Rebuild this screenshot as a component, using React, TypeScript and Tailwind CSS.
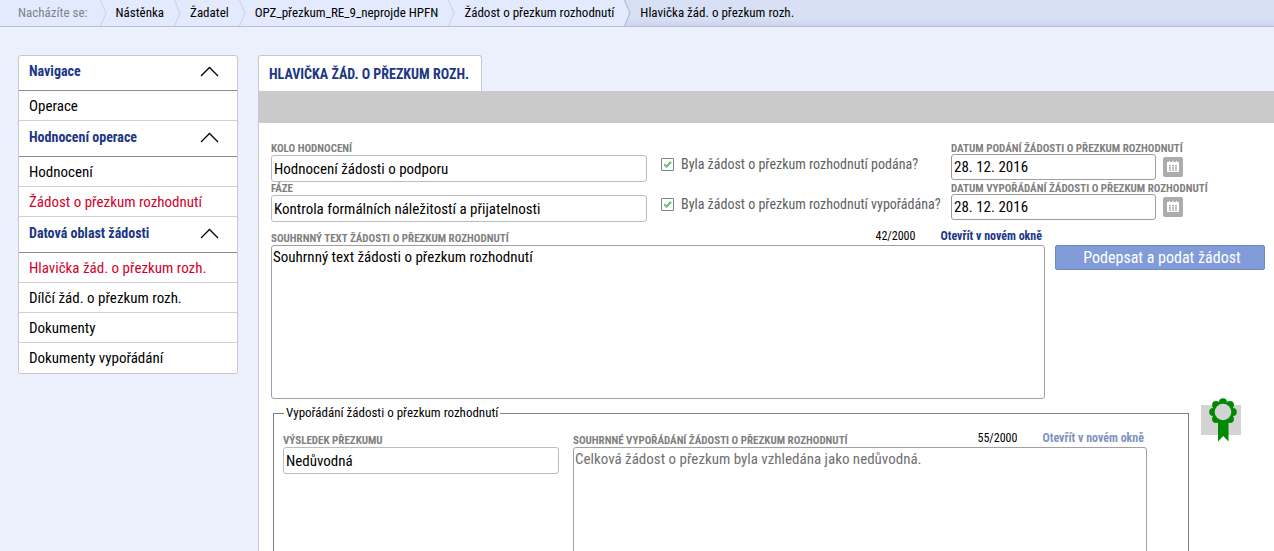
import React from "react";

const crumbs = ["Nástěnka", "Žadatel", "OPZ_přezkum_RE_9_neprojde HPFN", "Žádost o přezkum rozhodnutí"];

const menu = [
  { title: "Navigace", items: [{ text: "Operace", active: false }] },
  {
    title: "Hodnocení operace",
    items: [
      { text: "Hodnocení", active: false },
      { text: "Žádost o přezkum rozhodnutí", active: true },
    ],
  },
  {
    title: "Datová oblast žádosti",
    items: [
      { text: "Hlavička žád. o přezkum rozh.", active: true },
      { text: "Dílčí žád. o přezkum rozh.", active: false },
      { text: "Dokumenty", active: false },
      { text: "Dokumenty vypořádání", active: false },
    ],
  },
];

function CrumbArrow({ dark = false }: { dark?: boolean }) {
  return (
    <svg width="7" height="26" viewBox="0 0 7 26" className="shrink-0" aria-hidden="true">
      {dark && <path d="M0 0 L6 13 L0 26 Z" fill="#e3eafd" />}
      <path d="M0.5 0 L6 13 L0.5 26" fill="none" stroke={dark ? "#a9b2cb" : "#ccd1e2"} />
    </svg>
  );
}

function Breadcrumbs() {
  return (
    <nav
      aria-label="Drobečková navigace"
      className="flex h-[27px] shrink-0 border-b border-[#b9bed3] bg-[#e3eafd] text-[13px] leading-[26px] whitespace-nowrap text-black"
    >
      <span className="pr-3 pl-[18px] text-[#7d828c]">Nacházíte se:</span>
      {crumbs.map((c) => (
        <React.Fragment key={c}>
          <CrumbArrow />
          <a href="#" className="pr-[10px] pl-[9px]">
            {c}
          </a>
        </React.Fragment>
      ))}
      <span className="flex flex-1 bg-linear-to-b from-[#d8e0f5] from-70% to-[#ccd5ed]">
        <CrumbArrow dark />
        <span className="pl-[9px]">Hlavička žád. o přezkum rozh.</span>
      </span>
    </nav>
  );
}

function Sidebar() {
  return (
    <aside className="w-[220px] shrink-0 self-start overflow-hidden rounded-[3px] border border-[#c8c8c8] bg-white text-[15px]">
      {menu.map((group) => (
        <section key={group.title} className="group/menu first:-mt-px">
          <button
            type="button"
            className="flex h-9 w-full items-center justify-between border-b border-[#8c8c8c] pr-[18px] pb-[3px] pl-[10px] text-[14px] font-bold text-[#1c3784]"
          >
            {group.title}
            <svg width="19" height="11" viewBox="0 0 19 11" aria-hidden="true">
              <path d="M1 10 L9.5 1.5 L18 10" fill="none" stroke="#000" strokeWidth="1.3" />
            </svg>
          </button>
          <ul>
            {group.items.map((item) => (
              <li
                key={item.text}
                className="h-[30px] border-b border-[#d0d0d0] group-last/menu:last:border-b-0"
              >
                <a
                  href="#"
                  className={
                    item.active
                      ? "block px-[10px] leading-[31px] text-[#d4002a]"
                      : "block px-[10px] leading-[31px] text-black"
                  }
                >
                  {item.text}
                </a>
              </li>
            ))}
          </ul>
        </section>
      ))}
    </aside>
  );
}

function TextField({ id, label, value }: { id: string; label: string; value: string }) {
  return (
    <div className="flex flex-col">
      <label htmlFor={id} className="h-3 text-[11px] leading-[14px] font-bold whitespace-nowrap text-[#808080] uppercase">
        {label}
      </label>
      <input
        id={id}
        type="text"
        defaultValue={value}
        className="mt-px h-[27px] w-full rounded-[3px] border border-[#bcbcbc] bg-white px-[2px] text-[15px] text-black"
      />
    </div>
  );
}

function CalendarIcon() {
  return (
    <svg width="20" height="20" viewBox="0 0 20 20" aria-hidden="true">
      <path d="M4 5h2v-1h1v1h2.500v-1h1v1h2.500v-1h1v1h2v10H4z" fill="#fff" />
      <path
        d="M6 8h2v1.500H6zM9 8h2v1.500H9zM12 8h2v1.500h-2zM6 10.300h2v1.500H6zM9 10.300h2v1.500H9zM12 10.300h2v1.500h-2zM6 12.600h2v1.200H6zM9 12.600h2v1.200H9zM12 12.600h2v1.200h-2z"
        fill="#acacac"
      />
    </svg>
  );
}

function DateField({ id, label, value }: { id: string; label: string; value: string }) {
  return (
    <div className="flex h-10 flex-col">
      <label htmlFor={id} className="h-3 text-[11px] leading-[14px] font-bold whitespace-nowrap text-[#808080] uppercase">
        {label}
      </label>
      <div className="flex items-center gap-[7px]">
        <input
          id={id}
          type="text"
          defaultValue={value}
          className="h-[26px] w-[205px] rounded-[3px] border border-[#9c9c9c] bg-white px-[2px] text-[15px] text-black"
        />
        <button type="button" aria-label="Vybrat datum" className="rounded-[2px] bg-[#acacac]">
          <CalendarIcon />
        </button>
      </div>
    </div>
  );
}

function CheckField({ id, label }: { id: string; label: string }) {
  return (
    <div className="flex h-10 items-center gap-[7px]">
      <span className="grid shrink-0">
        <input
          id={id}
          type="checkbox"
          defaultChecked
          className="col-start-1 row-start-1 size-[13px] appearance-none rounded-[1px] border border-[#738585] bg-white"
        />
        <svg
          width="13"
          height="13"
          viewBox="0 0 13 13"
          className="pointer-events-none col-start-1 row-start-1"
          aria-hidden="true"
        >
          <path d="M3.200 6.200 L5.600 8.600 L10 3.800" fill="none" stroke="#62bf80" strokeWidth="2" />
        </svg>
      </span>
      <label htmlFor={id} className="text-[14px] whitespace-nowrap text-[#606060]">
        {label}
      </label>
    </div>
  );
}

function LongField({
  id,
  label,
  value,
  count,
  muted = false,
}: {
  id: string;
  label: string;
  value: string;
  count: string;
  muted?: boolean;
}) {
  return (
    <div className="flex min-w-0 flex-1 flex-col">
      <div className="flex h-[15px] text-[12px] leading-3 whitespace-nowrap">
        <label htmlFor={id} className="self-end text-[11px] leading-3 font-bold text-[#808080] uppercase">
          {label}
        </label>
        <span className="ml-auto text-black">{count}</span>
        <a
          href="#"
          className={
            muted
              ? "mr-[3px] ml-[25px] font-bold text-[#7f93bd]"
              : "mr-[3px] ml-[25px] font-bold text-[#1c3784]"
          }
        >
          Otevřít v novém okně
        </a>
      </div>
      <textarea
        id={id}
        defaultValue={value}
        className={
          muted
            ? "h-[154px] w-full resize-none rounded-[3px] border border-[#a0a0a0] px-px py-px text-[15px] leading-5 text-[#707070]"
            : "h-[154px] w-full resize-none rounded-[3px] border border-[#a0a0a0] px-px py-px text-[15px] leading-5 text-black"
        }
      />
    </div>
  );
}

function AwardIcon() {
  const petals = [0, 1, 2, 3, 4, 5, 6, 7];
  return (
    <svg width="28" height="44" viewBox="0 0 28 44" className="absolute -top-[7px] left-2" aria-hidden="true">
      <path d="M9 20h10.500v23.500L14.200 38 9 43.500z" fill="#008a00" />
      {petals.map((n) => (
        <circle
          key={n}
          cx={14 + 9.8 * Math.cos((n * Math.PI) / 4)}
          cy={14 + 9.8 * Math.sin((n * Math.PI) / 4)}
          r="4"
          fill="#008a00"
        />
      ))}
      <circle cx="14" cy="14" r="10.500" fill="#008a00" />
      <circle cx="14" cy="14" r="8.300" fill="#d3d3d3" />
    </svg>
  );
}

export default function App() {
  return (
    <div className="flex h-screen flex-col overflow-x-hidden bg-[#ecf0fd] font-['Roboto_Condensed','Liberation_Sans_Narrow',Roboto,sans-serif]">
      <Breadcrumbs />
      <div className="flex min-h-0 flex-1 gap-5 overflow-y-auto pt-7 pl-[18px] [scrollbar-width:none]">
        <Sidebar />
        <main className="min-w-0 flex-1">
          <h1 className="flex h-9 w-fit items-center rounded-t-[3px] border border-b-0 border-[#c8c8c8] bg-white px-3 pt-px pl-[10px] text-[14px] font-bold whitespace-nowrap text-[#1c3784] uppercase">
            Hlavička žád. o přezkum rozh.
          </h1>
          <div className="h-8 bg-[#cacaca]" />
          <form className="border-l border-[#c8c8c8] bg-white pt-[19px] pr-[9px] pb-6 pl-3">
            <div className="flex">
              <div className="min-w-0 flex-1">
                <TextField id="kolo" label="Kolo hodnocení" value="Hodnocení žádosti o podporu" />
                <TextField id="faze" label="Fáze" value="Kontrola formálních náležitostí a přijatelnosti" />
              </div>
              <div className="mt-[2px] -mb-[2px] ml-[14px] w-[290px] shrink-0">
                <CheckField id="podana" label="Byla žádost o přezkum rozhodnutí podána?" />
                <CheckField id="vyporadana" label="Byla žádost o přezkum rozhodnutí vypořádána?" />
              </div>
              <div className="w-[314px] shrink-0">
                <DateField id="datum-podani" label="Datum podání žádosti o přezkum rozhodnutí" value="28. 12. 2016" />
                <DateField
                  id="datum-vyporadani"
                  label="Datum vypořádání žádosti o přezkum rozhodnutí"
                  value="28. 12. 2016"
                />
              </div>
            </div>

            <div className="mt-2 flex gap-[10px]">
              <LongField
                id="souhrn"
                label="Souhrnný text žádosti o přezkum rozhodnutí"
                value="Souhrnný text žádosti o přezkum rozhodnutí"
                count="42/2000"
              />
              <button
                type="button"
                className="mt-[15px] h-[25px] w-[210px] shrink-0 self-start rounded-[2px] border border-[#6f88c8] bg-[#829bd9] pl-1 text-[16px] leading-none text-white"
              >
                Podepsat a podat žádost
              </button>
            </div>

            <div className="mt-[6px] mr-6 ml-[2px] flex items-start gap-3">
              <fieldset className="min-w-0 flex-1 border border-[#808080] pb-6">
                <legend className="ml-[10px] px-[2px] text-[13px] leading-4 text-black">
                  Vypořádání žádosti o přezkum rozhodnutí
                </legend>
                <div className="mt-[11px] mr-[41px] ml-[9px] flex gap-[14px]">
                  <div className="w-[276px] shrink-0 pt-[2px]">
                    <TextField id="vysledek" label="Výsledek přezkumu" value="Nedůvodná" />
                  </div>
                  <LongField
                    id="vyporadani"
                    label="Souhrnné vypořádání žádosti o přezkum rozhodnutí"
                    value="Celková žádost o přezkum byla vzhledána jako nedůvodná."
                    count="55/2000"
                    muted
                  />
                </div>
              </fieldset>
              <button type="button" aria-label="Podpis" className="relative h-[30px] w-10 shrink-0 bg-[#d3d3d3]">
                <AwardIcon />
              </button>
            </div>
          </form>
        </main>
      </div>
    </div>
  );
}
